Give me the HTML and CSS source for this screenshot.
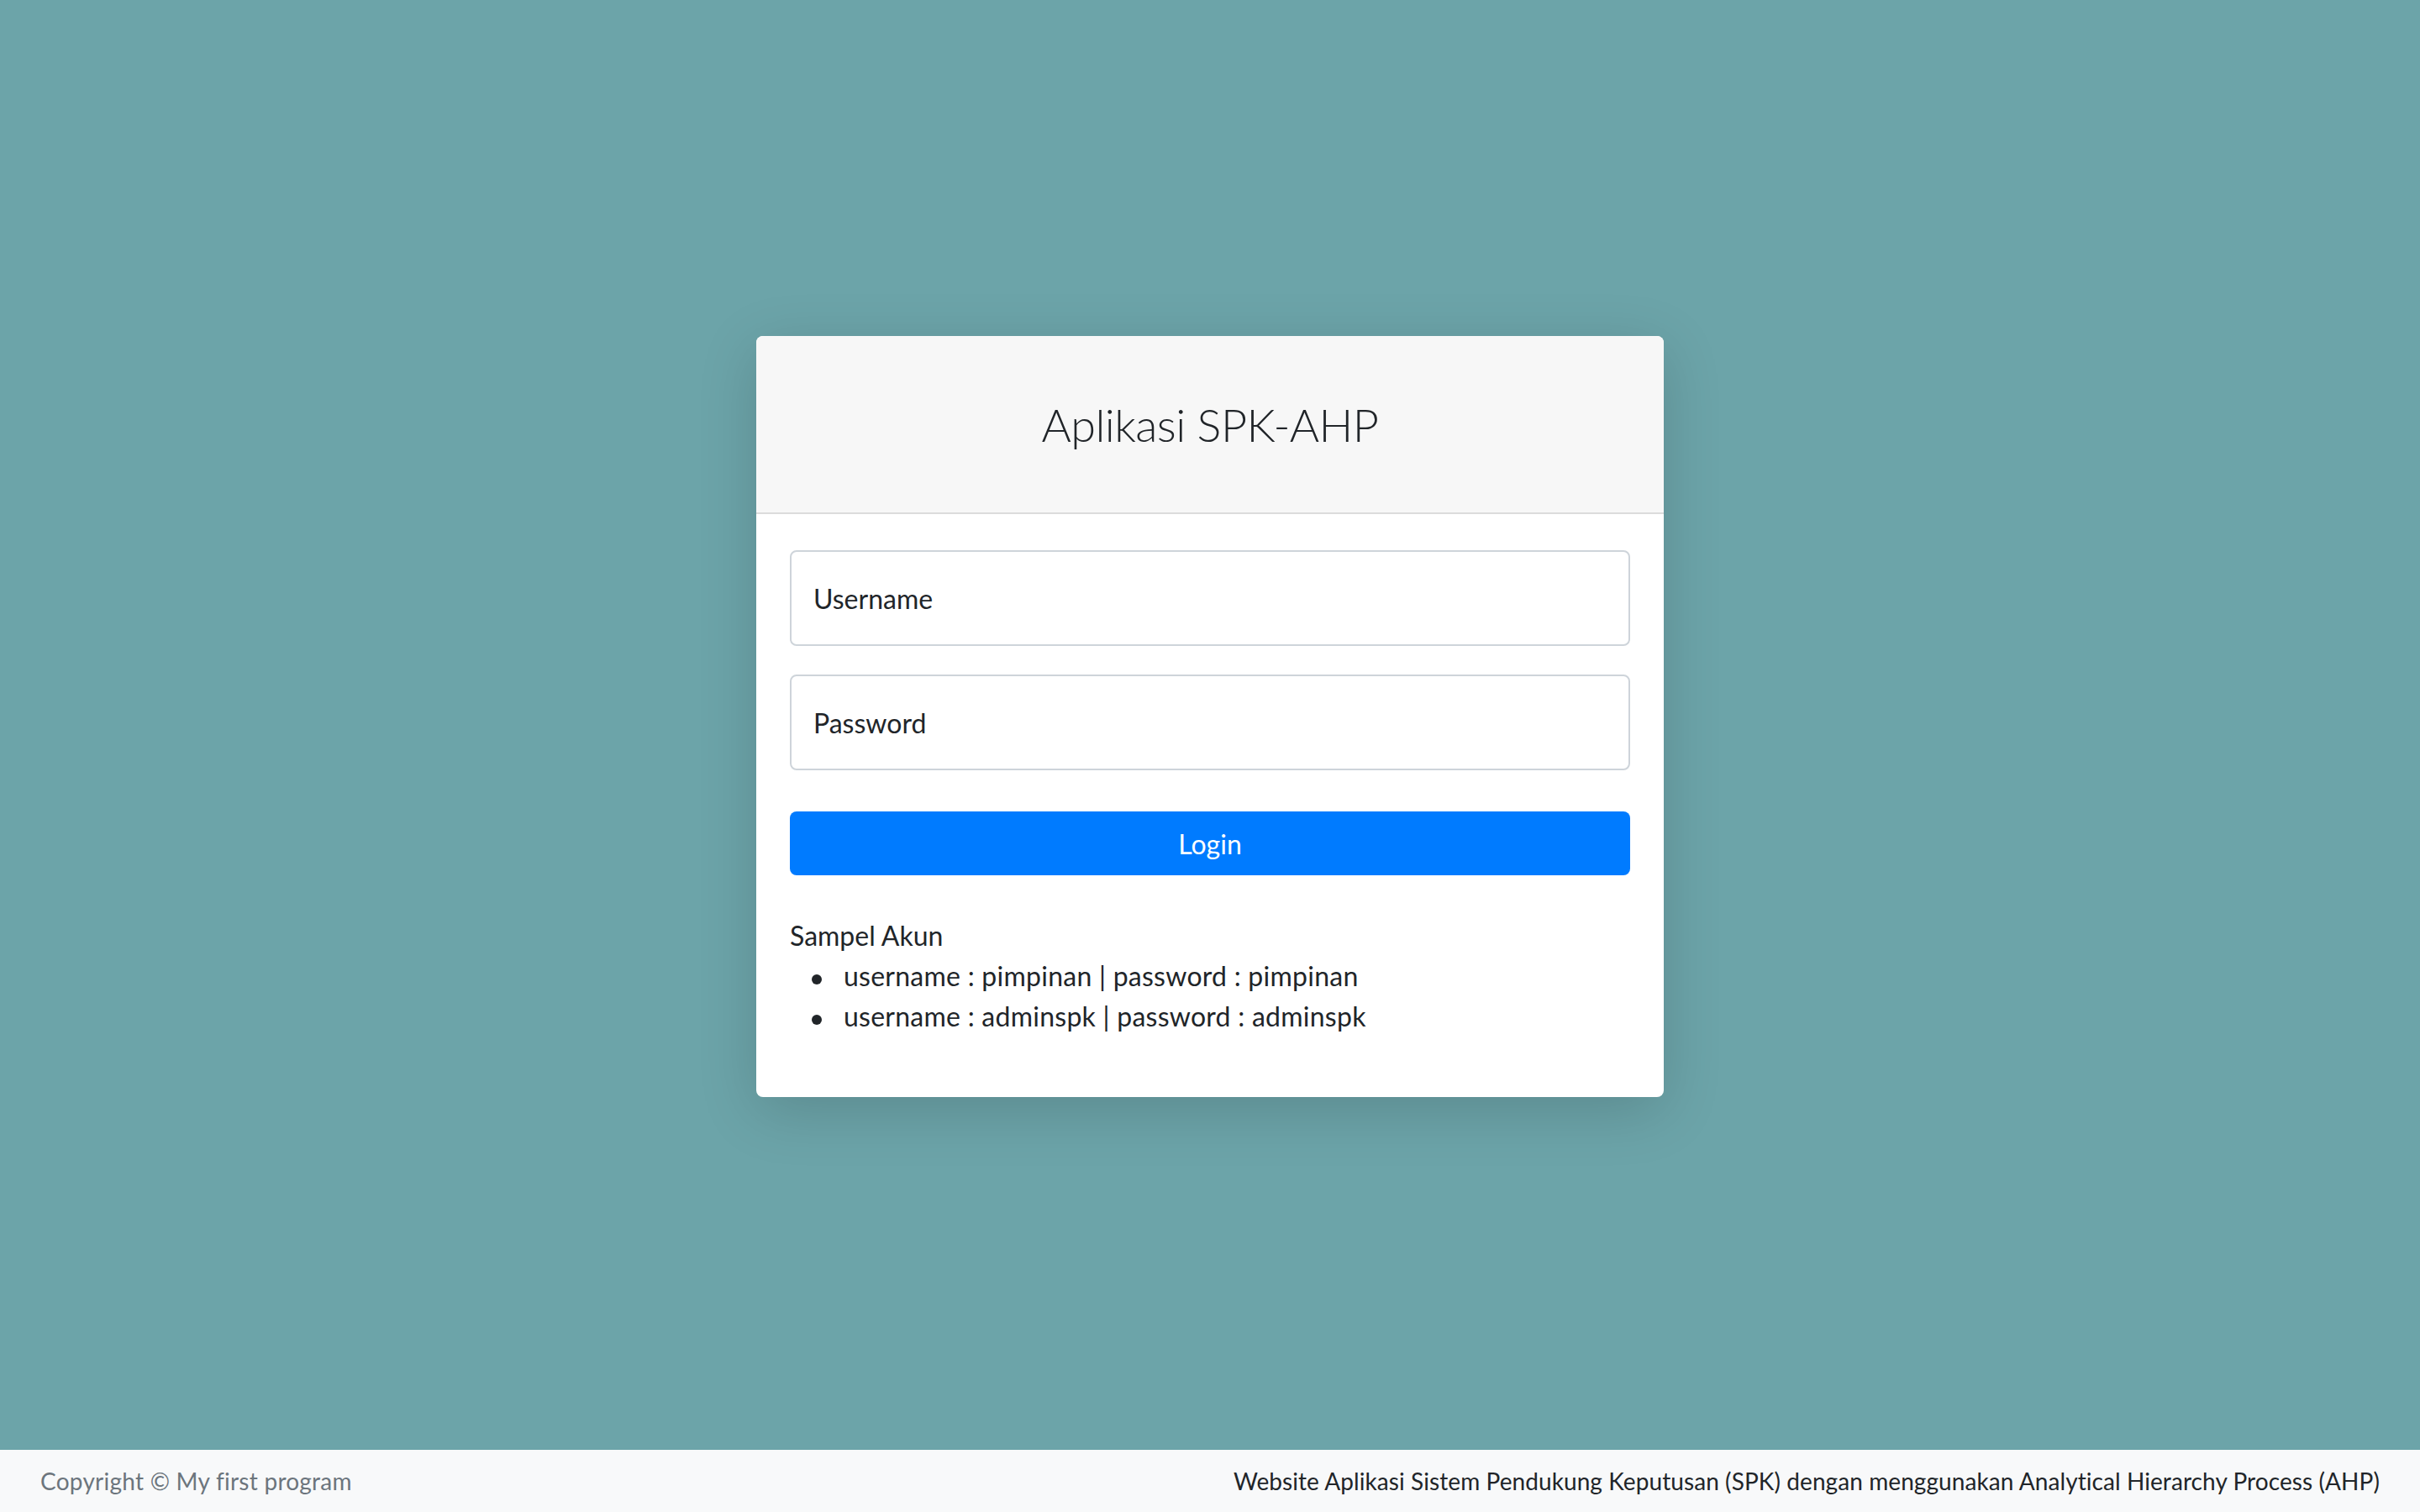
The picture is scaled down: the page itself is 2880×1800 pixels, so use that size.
FILE: index.html
```html
<!DOCTYPE html>
<html lang="id">
<head>
<meta charset="utf-8">
<title>Aplikasi SPK-AHP</title>
<link rel="stylesheet" href="styles.css">
</head>
<body>
<div class="page">
  <main class="main">
    <div class="card">
      <div class="card-header">
        <h3 class="title">Aplikasi SPK-AHP</h3>
      </div>
      <div class="card-body">
        <form class="login-form">
          <input class="form-control" type="text" placeholder="Username">
          <input class="form-control" type="password" placeholder="Password">
          <button class="btn" type="button">Login</button>
        </form>
        <div class="sample">
          <div class="sample-title">Sampel Akun</div>
          <ul class="sample-list">
            <li>username : pimpinan | password : pimpinan</li>
            <li>username : adminspk | password : adminspk</li>
          </ul>
        </div>
      </div>
    </div>
  </main>
  <footer class="footer">
    <div class="footer-left">Copyright © My first program</div>
    <div class="footer-right">Website Aplikasi Sistem Pendukung Keputusan (SPK) dengan menggunakan Analytical Hierarchy Process (AHP)</div>
  </footer>
</div>
</body>
</html>
```

FILE: styles.css
```css
* {
  box-sizing: border-box;
}

html, body {
  margin: 0;
  padding: 0;
  height: 100%;
}

body {
  font-family: "Lato", "Open Sans", sans-serif;
  color: #212529;
  background: #6ca4a9;
  font-size: 32px;
  line-height: 48px;
}

.page {
  min-height: 100vh;
  display: flex;
  flex-direction: column;
}

.main {
  flex: 1;
  display: flex;
  justify-content: center;
  align-items: flex-start;
  padding-top: 400px;
}

.card {
  width: 1080px;
  background: #fff;
  border-radius: 8px;
  box-shadow: 0 16px 70px rgba(0, 0, 0, 0.16);
  overflow: hidden;
}

.card-header {
  background: #f7f7f7;
  border-bottom: 2px solid #dcdcdc;
  padding: 72px 40px 71px;
  text-align: center;
}

.title {
  margin: 0;
  font-size: 54px;
  font-weight: 300;
  line-height: 67px;
  letter-spacing: -0.6px;
  color: #212529;
}

.card-body {
  padding: 43px 40px 40px;
}

.login-form {
  display: flex;
  flex-direction: column;
}

.form-control {
  display: block;
  width: 100%;
  height: 114px;
  padding: 0 26px;
  font-family: inherit;
  font-size: 32px;
  color: #495057;
  background: #fff;
  border: 2px solid #ced4da;
  border-radius: 8px;
  outline: none;
}

.form-control + .form-control {
  margin-top: 34px;
}

.form-control::placeholder {
  color: #212529;
  opacity: 1;
}

.btn {
  margin-top: 49px;
  height: 76px;
  width: 100%;
  border: none;
  border-radius: 8px;
  background: #007bff;
  color: #fff;
  font-family: inherit;
  font-size: 32px;
  cursor: pointer;
}

.sample {
  margin-top: 48px;
}

.sample-title {
  line-height: 48px;
}

.sample-list {
  margin: 0 0 32px;
  padding-left: 64px;
  list-style: none;
  letter-spacing: 0.25px;
}

.sample-list li::before {
  content: "";
  display: inline-block;
  width: 12px;
  height: 12px;
  border-radius: 50%;
  background: #212529;
  margin-left: -38px;
  margin-right: 26px;
  vertical-align: middle;
}

.footer {
  height: 74px;
  background: #f8f9fa;
  display: flex;
  justify-content: space-between;
  align-items: center;
  padding: 0 48px;
  font-size: 28px;
  line-height: 42px;
  letter-spacing: 0.08px;
}

.footer-left {
  color: #6c757d;
  letter-spacing: 0.25px;
}

.footer-right {
  color: #212529;
}
```
